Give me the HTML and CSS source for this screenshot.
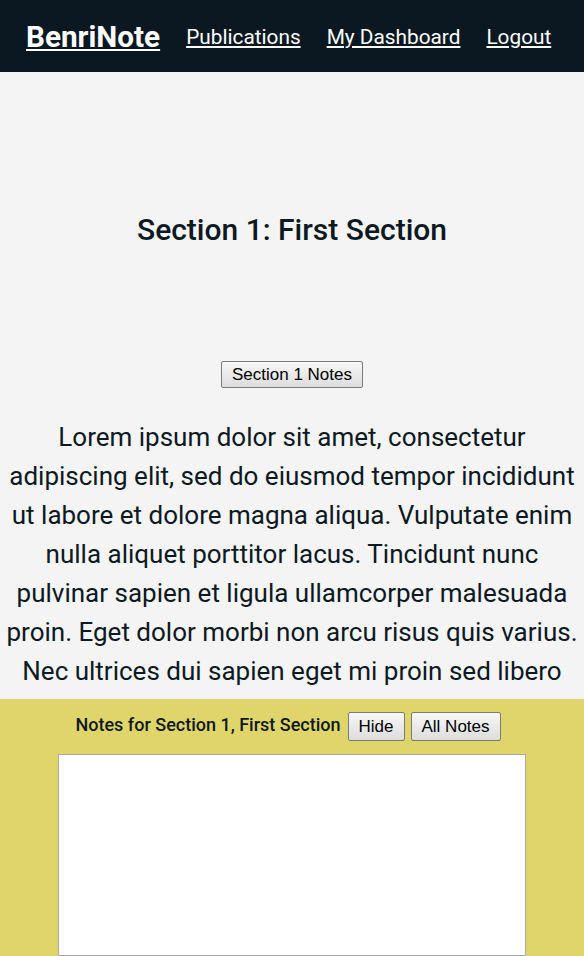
FILE: index.html
```html
<!DOCTYPE html>
<html>
<head>
<meta charset="utf-8">
<link rel="stylesheet" href="styles.css">
</head>
<body>
<header class="topbar">
  <a class="brand" href="#">BenriNote</a>
  <a class="navlink" href="#">Publications</a>
  <a class="navlink" href="#">My Dashboard</a>
  <a class="navlink" href="#">Logout</a>
</header>
<main class="content">
  <h1 class="section-title">Section 1: First Section</h1>
  <div class="notes-btn-row"><button class="btn">Section 1 Notes</button></div>
  <p class="body-text">Lorem ipsum dolor sit amet, consectetur adipiscing elit, sed do eiusmod tempor incididunt ut labore et dolore magna aliqua. Vulputate enim nulla aliquet porttitor lacus. Tincidunt nunc pulvinar sapien et ligula ullamcorper malesuada proin. Eget dolor morbi non arcu risus quis varius. Nec ultrices dui sapien eget mi proin sed libero enim. Sed faucibus turpis in eu mi bibendum neque egestas congue. Pellentesque habitant morbi tristique senectus et netus et malesuada fames.</p>
</main>
<aside class="notes-panel">
  <div class="notes-head">
    <span class="notes-title">Notes for Section 1, First Section</span>
    <button class="btn btn-small">Hide</button>
    <button class="btn btn-small">All Notes</button>
  </div>
  <textarea class="notes-area"></textarea>
</aside>
</body>
</html>
```
FILE: styles.css
```css
html, body {
  margin: 0;
  padding: 0;
  background: #f4f4f4;
  font-family: Roboto, "Liberation Sans", sans-serif;
  color: #0c1922;
}
.topbar {
  background: #0b1821;
  height: 72px;
  display: flex;
  align-items: center;
  padding-left: 26px;
  gap: 26px;
  box-sizing: border-box;
}
.topbar a {
  color: #ffffff;
  text-decoration: underline;
}
.brand {
  font-size: 29.7px;
  font-weight: 700;
}
.navlink {
  font-size: 20.8px;
  padding-top: 2px;
}
.content {
  padding: 0 5px 300px;
}
.section-title {
  margin: 0;
  padding: 138px 0 0;
  height: 149px;
  text-align: center;
  font-size: 30px;
  font-weight: 500;
  line-height: 40px;
}
.notes-btn-row {
  text-align: center;
  padding-top: 2px;
}
.btn {
  font-family: "Liberation Sans", Arial, sans-serif;
  font-size: 17px;
  color: #000;
  background: linear-gradient(#f7f7f7, #dddddd);
  border: 1px solid #7a7a7a;
  border-radius: 2px;
  padding: 1px 10px;
  height: 27px;
}
.body-text {
  margin: 30px 0 0;
  text-align: center;
  font-size: 26px;
  line-height: 39px;
}
.notes-panel {
  position: fixed;
  left: 0;
  right: 0;
  bottom: 0;
  height: 257px;
  background: #e0d56a;
  display: flex;
  flex-direction: column;
  align-items: center;
}
.notes-head {
  display: flex;
  align-items: center;
  gap: 6px;
  padding-top: 13px;
  height: 29px;
  margin-left: -8px;
}
.notes-title {
  font-size: 18px;
  font-weight: 500;
  margin-right: 1px;
  margin-top: -4px;
}
.btn-small {
  height: 29px;
  padding: 2px 10px;
}
.notes-area {
  margin-top: 13px;
  width: 468px;
  height: 260px;
  box-sizing: border-box;
  border: 1px solid #a9a9a9;
  background: #fff;
  resize: none;
}
```
